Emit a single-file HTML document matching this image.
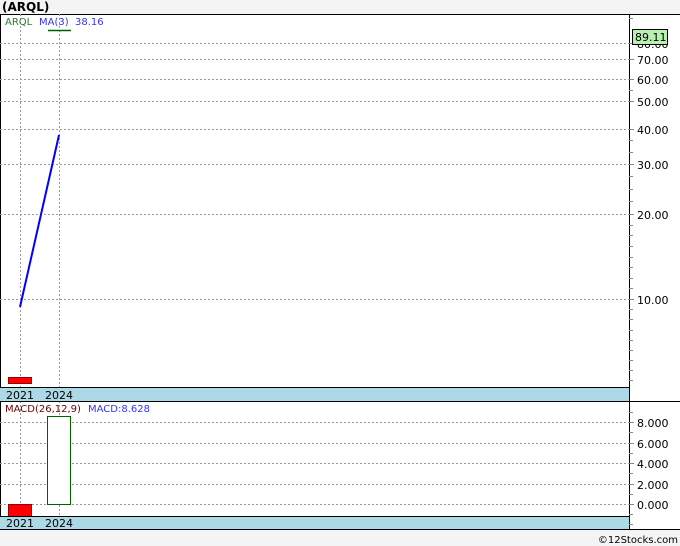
<!DOCTYPE html>
<html><head><meta charset="utf-8"><style>
html,body{margin:0;padding:0;background:#f4f4f4;}
svg{display:block;font-family:"DejaVu Sans","Liberation Sans",sans-serif;}
</style></head><body>
<svg width="680" height="546" viewBox="0 0 680 546" xmlns="http://www.w3.org/2000/svg">
<rect x="0" y="0" width="680" height="546" fill="#f4f4f4"/>
<text x="2" y="11" font-size="12" font-weight="bold" fill="#000">(ARQL)</text>
<rect x="0" y="14" width="680" height="516" fill="#fff"/>
<line x1="0" y1="14.5" x2="680" y2="14.5" stroke="#000"/>
<line x1="0.5" y1="14" x2="0.5" y2="530" stroke="#000"/>
<line x1="629.5" y1="14" x2="629.5" y2="530" stroke="#000"/>
<g stroke="#999" stroke-dasharray="2,2">
<line x1="0" y1="43.5" x2="629" y2="43.5"/>
<line x1="0" y1="59.5" x2="629" y2="59.5"/>
<line x1="0" y1="79.5" x2="629" y2="79.5"/>
<line x1="0" y1="101.5" x2="629" y2="101.5"/>
<line x1="0" y1="129.5" x2="629" y2="129.5"/>
<line x1="0" y1="164.5" x2="629" y2="164.5"/>
<line x1="0" y1="214.5" x2="629" y2="214.5"/>
<line x1="0" y1="299.5" x2="629" y2="299.5"/>
<line x1="0" y1="422.5" x2="629" y2="422.5"/>
<line x1="0" y1="443.5" x2="629" y2="443.5"/>
<line x1="0" y1="463.5" x2="629" y2="463.5"/>
<line x1="0" y1="484.5" x2="629" y2="484.5"/>
<line x1="0" y1="504.5" x2="629" y2="504.5"/>
<line x1="20.5" y1="14" x2="20.5" y2="387"/>
<line x1="59.5" y1="14" x2="59.5" y2="387"/>
<line x1="20.5" y1="401" x2="20.5" y2="516"/>
<line x1="59.5" y1="401" x2="59.5" y2="516"/>
</g>
<g stroke="#888">
<line x1="629" y1="18.5" x2="633" y2="18.5"/><line x1="629" y1="140.5" x2="633" y2="140.5"/><line x1="629" y1="152.5" x2="633" y2="152.5"/>
<line x1="629" y1="176.5" x2="633" y2="176.5"/><line x1="629" y1="189.5" x2="633" y2="189.5"/><line x1="629" y1="201.5" x2="633" y2="201.5"/>
<line x1="629" y1="225.5" x2="633" y2="225.5"/><line x1="629" y1="235.5" x2="633" y2="235.5"/><line x1="629" y1="246.5" x2="633" y2="246.5"/>
<line x1="629" y1="257.5" x2="633" y2="257.5"/><line x1="629" y1="267.5" x2="633" y2="267.5"/><line x1="629" y1="278.5" x2="633" y2="278.5"/>
<line x1="629" y1="288.5" x2="633" y2="288.5"/><line x1="629" y1="309.5" x2="633" y2="309.5"/><line x1="629" y1="319.5" x2="633" y2="319.5"/>
<line x1="629" y1="330.5" x2="633" y2="330.5"/><line x1="629" y1="340.5" x2="633" y2="340.5"/><line x1="629" y1="350.5" x2="633" y2="350.5"/>
<line x1="629" y1="360.5" x2="633" y2="360.5"/><line x1="629" y1="370.5" x2="633" y2="370.5"/><line x1="629" y1="380.5" x2="633" y2="380.5"/>
<line x1="629" y1="90.5" x2="633" y2="90.5"/>
<line x1="629" y1="43.5" x2="634" y2="43.5"/><line x1="629" y1="59.5" x2="634" y2="59.5"/><line x1="629" y1="79.5" x2="634" y2="79.5"/>
<line x1="629" y1="101.5" x2="634" y2="101.5"/><line x1="629" y1="129.5" x2="634" y2="129.5"/><line x1="629" y1="164.5" x2="634" y2="164.5"/>
<line x1="629" y1="214.5" x2="634" y2="214.5"/><line x1="629" y1="299.5" x2="634" y2="299.5"/>
<line x1="629" y1="412.5" x2="633" y2="412.5"/><line x1="629" y1="432.5" x2="633" y2="432.5"/><line x1="629" y1="453.5" x2="633" y2="453.5"/>
<line x1="629" y1="473.5" x2="633" y2="473.5"/><line x1="629" y1="494.5" x2="633" y2="494.5"/><line x1="629" y1="514.5" x2="633" y2="514.5"/>
<line x1="629" y1="422.5" x2="634" y2="422.5"/><line x1="629" y1="443.5" x2="634" y2="443.5"/><line x1="629" y1="463.5" x2="634" y2="463.5"/>
<line x1="629" y1="484.5" x2="634" y2="484.5"/><line x1="629" y1="504.5" x2="634" y2="504.5"/><line x1="629" y1="524.5" x2="633" y2="524.5"/>
</g>
<g font-size="11" fill="#000">
<text x="637" y="48">80.00</text>
<text x="637" y="64">70.00</text><text x="637" y="84">60.00</text><text x="637" y="106">50.00</text>
<text x="637" y="134">40.00</text><text x="637" y="169">30.00</text><text x="637" y="219">20.00</text>
<text x="637" y="304">10.00</text>
<text x="637" y="427">8.000</text><text x="637" y="448">6.000</text><text x="637" y="468">4.000</text>
<text x="637" y="489">2.000</text><text x="637" y="509">0.000</text>
</g>
<rect x="632.5" y="29.5" width="35" height="15" fill="#b8f0b0" stroke="#000"/>
<text x="635" y="41" font-size="11" fill="#000">89.11</text>
<text x="5" y="25" font-size="10" fill="#2a7a2a">ARQL</text>
<text x="39" y="25" font-size="10" fill="#3333ff">MA(3)</text>
<text x="75" y="25" font-size="10" fill="#3333ff">38.16</text>
<line x1="48" y1="30.5" x2="71" y2="30.5" stroke="#006000" stroke-width="1.5"/>
<line x1="20" y1="307" x2="59" y2="135" stroke="#0000ff" stroke-width="2"/>
<rect x="8.5" y="377.5" width="23" height="6" fill="#ff0000" stroke="#900"/>
<rect x="0" y="387" width="629" height="14" fill="#add8e6"/>
<line x1="0" y1="387.5" x2="629" y2="387.5" stroke="#000"/>
<line x1="0" y1="401.5" x2="680" y2="401.5" stroke="#000"/>
<text x="6" y="399" font-size="11" fill="#000">2021</text>
<text x="45" y="399" font-size="11" fill="#000">2024</text>
<text x="5" y="412" font-size="10" fill="#600">MACD(26,12,9)</text>
<text x="88" y="412" font-size="10" fill="#3333ff">MACD:8.628</text>
<rect x="47.5" y="416.5" width="23" height="88" fill="#fff" stroke="#006000"/>
<rect x="8.5" y="504.5" width="23" height="12" fill="#ff0000" stroke="#900"/>
<rect x="0" y="516" width="629" height="14" fill="#add8e6"/>
<line x1="0" y1="516.5" x2="629" y2="516.5" stroke="#000"/>
<line x1="0" y1="529.5" x2="680" y2="529.5" stroke="#000"/>
<text x="6" y="527" font-size="11" fill="#000">2021</text>
<text x="45" y="527" font-size="11" fill="#000">2024</text>
<text x="678" y="543" font-size="10" fill="#000" text-anchor="end">©12Stocks.com</text>
</svg>
</body></html>
